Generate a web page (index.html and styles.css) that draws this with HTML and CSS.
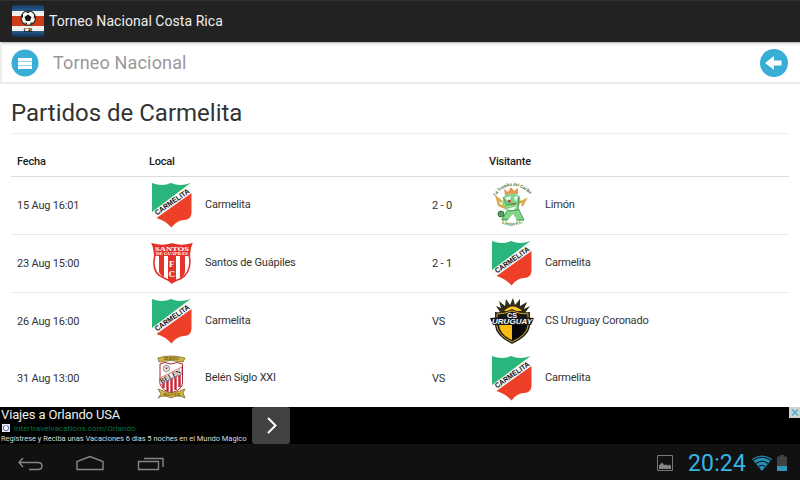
FILE: index.html
```html
<!DOCTYPE html>
<html lang="es">
<head>
  <meta charset="UTF-8" />
  <meta name="viewport" content="width=device-width, initial-scale=1.0" />
  <title>Torneo Nacional Costa Rica</title>
  <link rel="stylesheet" href="styles.css">
</head>
<body>
  <!-- Team badges -->
  <svg class="sprite" aria-hidden="true">
    <defs>
      <path id="arc-top" d="M6 14 Q22 -6 42 13"/>
      <path id="arc-bottom" d="M11 40 Q23 48 36 39"/>
    </defs>
    <symbol id="carmelita" viewBox="0 0 46 46">
      <path d="M3 1 Q13 5 22 1 Q31 5 42 1 L42 34 Q41 38 35 38 Q27 38 22.500 45 Q18 39 10 37 Q3 37 3 32Z" fill="#fafafa"/>
      <path d="M3 1 Q13 5 22 1 Q31 5 41.500 1 L3 30Z" fill="#29b57b"/>
      <path d="M42.500 11 V31 Q42 38 35 38 Q28 38 22.500 45.500 Q17 39 7.500 36Z" fill="#ee4029"/>
      <text x="8" y="33.600" transform="rotate(-35 8 33.600)" textLength="40.500" lengthAdjust="spacingAndGlyphs" class="badge-text" font-size="7.500" fill="#151515">CARMELITA</text>
    </symbol>
    <symbol id="santos" viewBox="0 0 46 46">
      <path d="M3.500 4 Q13 7 23 4 Q33 7 42.500 4 Q39 12 41 21 Q41 34 31 39 Q25 41 23 43 Q20 40 15 38 Q4 34 5 21 Q7 12 3.500 4Z" fill="#fff" stroke="#e5322b" stroke-width="1.600"/>
      <path d="M4 4.500 Q13 7 23 4 Q33 7 42 4.500 L40.500 16 H5.500Z" fill="#e5322b"/>
      <path d="M10 15 H15 V37 Q11 35 10 32Z M19 15 H27 V40 L23 43 L19 40Z M31 15 H36 V32 Q35 36 31 38Z" fill="#e5322b"/>
      <text x="6" y="10.500" textLength="34" lengthAdjust="spacingAndGlyphs" class="badge-serif" font-size="6" fill="#fff">SANTOS</text>
      <text x="7" y="15.300" textLength="32" lengthAdjust="spacingAndGlyphs" class="badge-serif" font-size="5" fill="#fff">DE GUAPILES</text>
      <text x="20" y="27" class="badge-serif" font-size="9" fill="#fff">F</text>
      <text x="19.700" y="36.500" class="badge-serif" font-size="9" fill="#fff">C</text>
    </symbol>
    <symbol id="limon" viewBox="0 0 46 46">
      <text class="badge-text" font-size="4.600" fill="#45753a"><textPath href="#arc-top" textLength="41" lengthAdjust="spacingAndGlyphs">La Tromba del Caribe</textPath></text>
      <text class="badge-text" font-size="4.600" fill="#35833a"><textPath href="#arc-bottom" startOffset="2">Limón F.C.</textPath></text>
      <path d="M16 13 L15 7 L19 10 L22 5 L25 9 L29 6 L29 12Z" fill="#e9944a"/>
      <path d="M15 14 Q23 9 29 13 Q34 18 29 25 L31 31 L35 38 L28 38 L24 32 L18 39 L12 38 L18 29 L13 23Z" fill="#82d58a"/>
      <path d="M16 16 L22 14 L20 20Z M25 15 L29 14 L27 20Z M18 27 L28 24 L24 29Z" fill="#f7fff5"/>
      <path d="M13 20 L8 16 L10 23 L17 26 M28 22 L36 18 L33 24" fill="none" stroke="#d8ad52" stroke-width="2.500"/>
      <path d="M14 15 L18 23 L27 21 M19 29 L29 28 M30 14 L29 26 L35 38 H27 M18 29 L13 38 L19 37" fill="none" stroke="#479b50"/>
      <path d="M19 18 L22 19 L20 21Z M22 22 H27" fill="#a45545" stroke="#a45545"/>
      <circle cx="12" cy="32" r="3" fill="#5b9d5d" stroke="#31713d"/>
    </symbol>
    <symbol id="uruguay" viewBox="0 0 46 46">
      <path d="M11 14 L7 8 L12 10 L10 3 L16 8 L17 1 L21 7 L24 0 L26 7 L31 1 L31 8 L38 4 L35 11 L41 8 L36 15Z" fill="#302b18"/>
      <path d="M15 13 Q24 4 33 13Z" fill="#ffc629"/>
      <path d="M6 14 Q15 15 23 11 Q31 15 41 14 V28 Q40 38 23 46 Q7 38 6 28Z" fill="#272725"/>
      <path d="M8 16 Q15 16 23 13 Q31 16 39 16 V28 Q38 37 23 44 Q9 37 8 28Z" fill="#181818" stroke="#d5a21f"/>
      <path d="M10 27 H23 V42 Q11 37 10 27Z" fill="#fdbb18"/>
      <path d="M23 27 H37 Q36 37 23 42Z" fill="#080808"/>
      <path d="M1 20 Q23 18 45 20 L42 27 Q23 26 4 27Z" fill="#171717"/>
      <text x="18" y="19.500" textLength="10" lengthAdjust="spacingAndGlyphs" class="badge-text" font-size="6.500" fill="#fff">CS</text>
      <text x="3" y="26.300" textLength="40" lengthAdjust="spacingAndGlyphs" class="badge-text" font-size="7.500" font-style="italic" fill="#fff">URUGUAY</text>
    </symbol>
    <symbol id="belen" viewBox="0 0 46 46">
      <path d="M11 9 L16 7.500 L22 9 L28 7.500 L33.500 9 V28 Q33 35 22 38 Q12 35 11 28Z" fill="#fff" stroke="#a82835"/>
      <path d="M14.500 27 V33 M18.500 24 V36 M22.500 22 V37 M26.500 20 V35 M30.500 17 V32" stroke="#c92435" stroke-width="2.400"/>
      <path d="M9 3 Q21 -1 36 3 L34 7 Q21 4 10 7Z M9 34 Q22 41 36 34 L34 38 L36 43 Q29 39 22 43 Q15 39 9 43 L12 39Z" fill="#d7b63e" stroke="#6c5924" stroke-width=".7"/>
      <circle cx="17.500" cy="13.500" r="3.200" fill="#eee" stroke="#666" stroke-width=".8"/>
      <path d="M16 12.500 H19 L17.500 15Z" fill="#a33"/>
      <path d="M11 23 L33 12 V19 L11 30Z" fill="#f7f7f7" stroke="#a92633" stroke-width=".6"/>
      <text x="12.500" y="28.500" transform="rotate(-26.500 12.500 28.500)" textLength="22.500" lengthAdjust="spacingAndGlyphs" class="badge-serif" font-size="7" fill="#3d2024">BELEN</text>
      <text x="15" y="5" textLength="15" lengthAdjust="spacingAndGlyphs" class="badge-serif" font-size="3.500" fill="#594810">HEREDIA</text>
      <text x="14" y="40.500" textLength="17" lengthAdjust="spacingAndGlyphs" class="badge-serif" font-size="3.500" fill="#594810">SIGLO XXI</text>
    </symbol>
  </svg>

  <header class="app-bar">
    <svg class="app-icon" viewBox="0 0 32 32">
      <defs>
        <linearGradient id="stripe" x2="0" y2="1"><stop stop-color="#16395c"/><stop offset=".2" stop-color="#2a639c"/><stop offset=".8" stop-color="#2a5f96"/><stop offset="1" stop-color="#12304f"/></linearGradient>
        <clipPath id="icon-clip"><rect width="32" height="32" rx="3"/></clipPath>
      </defs>
      <g clip-path="url(#icon-clip)">
        <rect width="32" height="32" fill="url(#stripe)"/>
        <path d="M0 6H32V26H0Z" fill="#f1efed"/>
        <path d="M0 11H32V21H0Z" fill="#cc3d18"/>
      </g>
      <circle cx="16.300" cy="13" r="7.200" fill="#f7f7f7" stroke="#202020" stroke-width="1.100"/>
      <path d="M16 9.500L19.500 12L18 16H14L12.500 12ZM13 6.500L19 6.300L16 8.300ZM9.500 11.500L11 8.500V13.500ZM22.500 9.500L21.500 13.500L23.400 12.500ZM12 17.500L15 18L15 19.500ZM18 18.500L21 16.500L19 19.500Z" fill="#151515"/>
      <text x="11.500" y="26.500" textLength="9" lengthAdjust="spacingAndGlyphs" class="badge-serif" font-size="7" fill="#111">CR</text>
    </svg>
    <span class="app-name">Torneo Nacional Costa Rica</span>
  </header>

  <nav class="toolbar">
    <svg class="round-btn" viewBox="0 0 28 28">
      <circle cx="14" cy="14" r="13.500" fill="#38aed6"/>
      <path d="M7 9H21V12H7ZM7 13H21V16H7ZM7 17H21V20H7Z" fill="#fff"/>
      <path d="M7 12.500H21M7 16.500H21" stroke="#94d2e8"/>
    </svg>
    <span class="toolbar-title">Torneo Nacional</span>
    <svg class="round-btn" viewBox="0 0 28 28">
      <circle cx="14" cy="14" r="14" fill="#38aed6"/>
      <path d="M5 14L14 7V11.500H21.500V16.500H14V21Z" fill="#fff"/>
    </svg>
  </nav>

  <main class="content">
    <h1><span class="page-title">Partidos de Carmelita</span></h1>
    <div class="row head">
      <span class="date">Fecha</span>
      <span class="local">Local</span>
      <span class="score"></span>
      <span class="visitor">Visitante</span>
    </div>
    <div class="row">
      <span class="date">15 Aug 16:01</span>
      <span class="local team"><svg class="badge"><use href="#carmelita"/></svg><span>Carmelita</span></span>
      <span class="score">2 - 0</span>
      <span class="visitor team"><svg class="badge"><use href="#limon"/></svg><span>Limón</span></span>
    </div>
    <div class="row">
      <span class="date">23 Aug 15:00</span>
      <span class="local team"><svg class="badge"><use href="#santos"/></svg><span>Santos de Guápiles</span></span>
      <span class="score">2 - 1</span>
      <span class="visitor team"><svg class="badge"><use href="#carmelita"/></svg><span>Carmelita</span></span>
    </div>
    <div class="row open">
      <span class="date">26 Aug 16:00</span>
      <span class="local team"><svg class="badge"><use href="#carmelita"/></svg><span>Carmelita</span></span>
      <span class="score">VS</span>
      <span class="visitor team"><svg class="badge"><use href="#uruguay"/></svg><span>CS Uruguay Coronado</span></span>
    </div>
    <div class="row open last">
      <span class="date">31 Aug 13:00</span>
      <span class="local team"><svg class="badge"><use href="#belen"/></svg><span>Belén Siglo XXI</span></span>
      <span class="score">VS</span>
      <span class="visitor team"><svg class="badge"><use href="#carmelita"/></svg><span>Carmelita</span></span>
    </div>
  </main>

  <aside class="ad">
    <div class="ad-copy">
      <span class="ad-title">Viajes a Orlando USA</span>
      <span class="ad-link">
        <svg class="favicon" viewBox="0 0 8 8"><path d="M0 0H8V8H0Z" fill="#e8e8f3"/><circle cx="4" cy="4" r="2.700" fill="none" stroke="#6374b8"/><path d="M4 1V6" stroke="#fff"/></svg>
        <span class="ad-url">intertravelvacations.com/Orlando</span>
      </span>
      <span class="ad-text">Regístrese y Reciba unas Vacaciones 6 dias 5 noches en el Mundo Magico</span>
    </div>
    <div class="ad-go">
      <svg width="38" height="37" viewBox="0 0 38 37"><path d="M16 11L23.500 18.500L16 26" fill="none" stroke="#fff" stroke-width="2"/></svg>
    </div>
    <svg class="ad-close" viewBox="0 0 11 11"><path d="M0 0H11V11H0Z" fill="#d2d2d2"/><path d="M3 2.500L9 8.500M9 2.500L3 8.500" stroke="#35b0cf" stroke-width="1.200"/></svg>
  </aside>

  <footer class="system-bar">
    <svg class="nav-keys" viewBox="0 0 180 36" fill="none" stroke="#858785" stroke-width="1.400">
      <path d="M23 13L19 17.500L23 22M19 17.500H38Q42 17.500 42 21Q42 24.500 38 24.500H29"/>
      <path d="M77 24.500V16.500L90 11.500L103 16.500V24.500Z"/>
      <path d="M138.500 16.500H158.500V24.500H138.500ZM144 13.500H163V22"/>
    </svg>
    <svg class="picture" viewBox="0 0 16 16"><path d="M.5.500H15.500V15.500H.5Z" fill="none" stroke="#777"/><path d="M2 14V10.500L5 7.500L7 10L9 9.500L11 10.500L12.500 9.500L14 11V14Z" fill="#858585"/></svg>
    <span class="clock">20:24</span>
    <svg class="wifi" viewBox="0 0 20 16"><path d="M0 4Q10 -3 20 4L10 16Z" fill="#2590b7"/><path d="M1 5.500Q10 -1 19 5.500M4 8.500Q10 4 16 8.500M7 11.500Q10 9 13 11.500" fill="none" stroke="#111" stroke-width="1.100"/></svg>
    <svg class="battery" viewBox="0 0 10 16"><path d="M3 0H7V1.500H10V16H0V1.500H3Z" fill="#414141"/><path d="M0 11H10V16H0Z" fill="#3095bb"/></svg>
  </footer>
</body>
</html>
```

FILE: styles.css
```css
* {
  box-sizing: border-box;
}

body {
  margin: 0;
  width: 800px;
  height: 480px;
  display: flex;
  flex-direction: column;
  overflow: hidden;
  background: #fff;
  font-family: Roboto, sans-serif;
  color: #333;
}

span {
  white-space: nowrap;
}

svg {
  display: block;
  flex: none;
}

.sprite {
  display: none;
}

.badge-text {
  font-family: "Liberation Sans", sans-serif;
  font-weight: bold;
  letter-spacing: 0;
}

.badge-serif {
  font-family: "Liberation Serif", serif;
  font-weight: bold;
  letter-spacing: 0;
}

/* Top bars */
.app-bar {
  height: 42px;
  flex: none;
  display: flex;
  align-items: center;
  padding-left: 12px;
  background: #222;
  border-top: 1px solid #303030;
}

.app-icon {
  width: 32px;
  height: 32px;
  margin-top: -1px;
}

.app-name {
  margin-left: 5px;
  margin-top: -1px;
  font-size: 14px;
  letter-spacing: 0.05px;
  color: #eee;
}

.toolbar {
  height: 42px;
  flex: none;
  display: flex;
  align-items: center;
  padding: 1px 12px 0 9px;
  border-left: 2px solid #eee;
  border-bottom: 2px solid #ececec;
  background: linear-gradient(#b5b5b5, #f2f2f2 2px, #fff 5px);
}

.round-btn {
  width: 28px;
  height: 28px;
}

.toolbar-title {
  margin-left: 14px;
  margin-right: auto;
  font-size: 18px;
  letter-spacing: 0.16px;
  color: #999;
}

/* Matches table */
.content {
  height: 323px;
  flex: none;
  padding: 12px 11px 0;
  overflow: hidden;
}

h1 {
  margin: 0;
  height: 38px;
  border-bottom: 1px solid #eee;
  font-size: 24px;
  line-height: 34px;
  font-weight: 400;
}

.row {
  display: flex;
  align-items: center;
  height: 58px;
  padding-left: 6px;
  border-bottom: 1px solid #e8e8e8;
  font-size: 11px;
  letter-spacing: -0.2px;
}

.head {
  height: 43px;
  padding-top: 12px;
  border-bottom-color: #ddd;
  font-weight: 500;
  color: #222;
}

.open {
  border-bottom-color: transparent;
}

.last {
  height: 56px;
}

.date {
  width: 132px;
}

.local {
  width: 283px;
}

.score {
  width: 57px;
}

.team {
  display: flex;
  align-items: center;
  padding-bottom: 2px;
}

.badge {
  width: 46px;
  height: 46px;
  margin-right: 10px;
}

/* Ad banner */
.ad {
  height: 37px;
  flex: none;
  display: flex;
  background: #000;
}

.ad-copy {
  width: 252px;
  padding-left: 1px;
  display: flex;
  flex-direction: column;
}

.ad-title {
  font-size: 13px;
  line-height: 16px;
  letter-spacing: -0.15px;
  color: #eee;
}

.ad-link {
  display: flex;
  align-items: center;
  height: 11px;
  font-size: 8px;
  letter-spacing: 0.08px;
  color: #087646;
}

.favicon {
  width: 8px;
  height: 8px;
  margin: 0 4px 0 1px;
}

.ad-text {
  font-size: 7.5px;
  line-height: 11px;
  letter-spacing: -0.03px;
  color: #ddd;
}

.ad-go {
  width: 38px;
  background: #424242;
  border-radius: 3px;
}

.ad-close {
  width: 11px;
  height: 11px;
  margin-left: auto;
}

/* System bar */
.system-bar {
  height: 36px;
  flex: none;
  display: flex;
  align-items: center;
  padding-right: 13px;
  padding-top: 1px;
  background: #111;
}

.nav-keys {
  width: 180px;
  height: 36px;
  margin-right: auto;
}

.picture {
  width: 16px;
  height: 16px;
}

.clock {
  width: 58px;
  margin: 2px 6px 0 15px;
  font-size: 23px;
  letter-spacing: 0.15px;
  color: #33b5e5;
}

.wifi {
  width: 20px;
  height: 16px;
  margin-right: 5px;
}

.battery {
  width: 10px;
  height: 16px;
}
```
